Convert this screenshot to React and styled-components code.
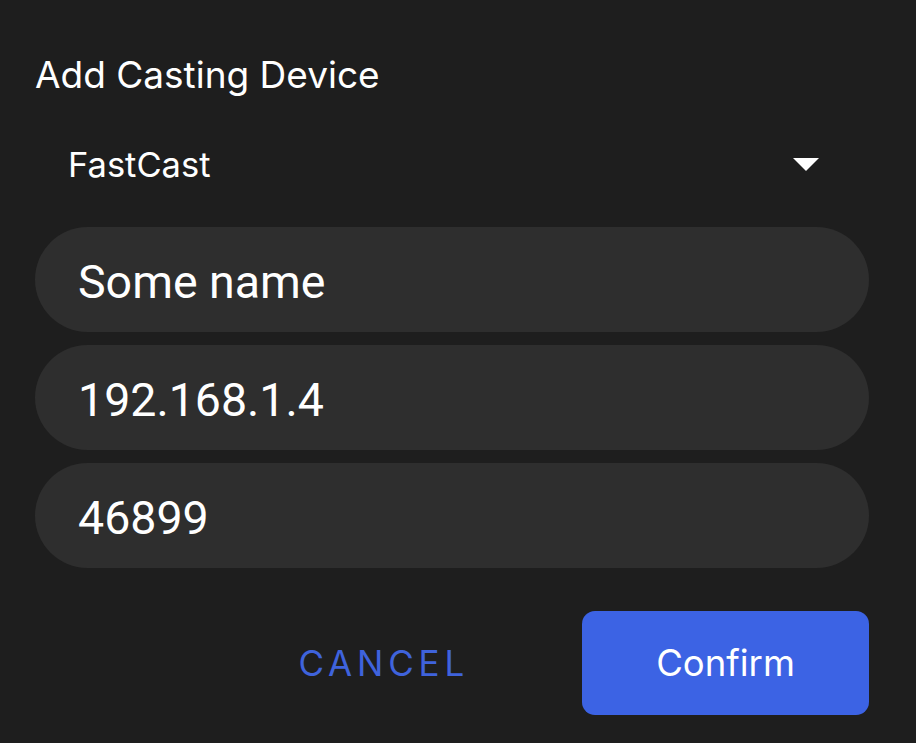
import React from "react";
import styled, { createGlobalStyle } from "styled-components";

const Global = createGlobalStyle`
  html, body { margin: 0; padding: 0; background: #1e1e1e; }
  * { box-sizing: border-box; }
`;

const Dialog = styled.div`
  width: 916px;
  height: 743px;
  background: #1e1e1e;
  padding: 53px 47px 0 35px;
  display: flex;
  flex-direction: column;
  font-family: Inter, "Noto Sans", sans-serif;
  color: #ffffff;
`;

const Title = styled.h2`
  margin: 0;
  font-family: Inter, sans-serif;
  font-weight: 400;
  font-size: 37px;
  line-height: 44px;
  color: #ffffff;
`;

const SelectRow = styled.div`
  margin-top: 48px;
  height: 40px;
  display: flex;
  align-items: center;
  justify-content: space-between;
  padding: 0 50px 0 33px;
`;

const SelectLabel = styled.span`
  font-family: Inter, sans-serif;
  font-size: 34.5px;
  line-height: 40px;
  color: #ffffff;
`;

const Caret = styled.svg`
  width: 26px;
  height: 13px;
  display: block;
  margin-top: -2px;
`;

const Fields = styled.div`
  margin-top: 42px;
  display: flex;
  flex-direction: column;
  gap: 13px;
`;

const Field = styled.div`
  height: 105px;
  border-radius: 53px;
  background: #2e2e2e;
  display: flex;
  align-items: center;
  padding: 4px 43px 0;
  font-family: Roboto, sans-serif;
  font-size: 46.5px;
  color: #ffffff;
`;

const Actions = styled.div`
  margin-top: 43px;
  display: flex;
  justify-content: flex-end;
  align-items: center;
  gap: 113px;
`;

const CancelButton = styled.button`
  background: none;
  border: none;
  padding: 0;
  font-family: Inter, sans-serif;
  font-size: 35px;
  letter-spacing: 4.8px;
  color: #3f63dc;
  height: 104px;
  display: flex;
  align-items: center;
`;

const ConfirmButton = styled.button`
  width: 287px;
  height: 104px;
  border: none;
  border-radius: 13px;
  background: #3c63e4;
  color: #ffffff;
  font-family: Inter, sans-serif;
  font-size: 36.5px;
  display: flex;
  align-items: center;
  justify-content: center;
`;

export default function App() {
  return (
    <>
      <Global />
      <Dialog>
        <Title>Add Casting Device</Title>
        <SelectRow>
          <SelectLabel>FastCast</SelectLabel>
          <Caret viewBox="0 0 26 13">
            <polygon points="0,0 26,0 13,13" fill="#ffffff" />
          </Caret>
        </SelectRow>
        <Fields>
          <Field>Some name</Field>
          <Field>192.168.1.4</Field>
          <Field>46899</Field>
        </Fields>
        <Actions>
          <CancelButton>CANCEL</CancelButton>
          <ConfirmButton>Confirm</ConfirmButton>
        </Actions>
      </Dialog>
    </>
  );
}
